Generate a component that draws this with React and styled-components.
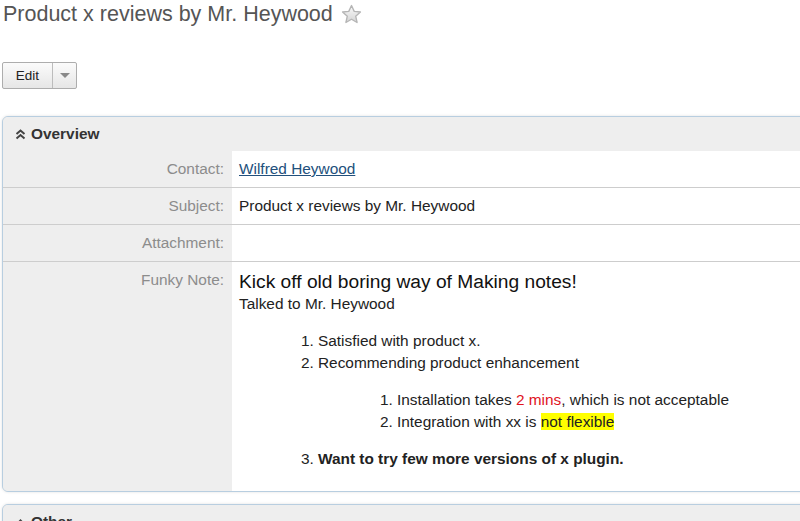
import React from 'react';
import styled, { createGlobalStyle } from 'styled-components';

const GlobalStyle = createGlobalStyle`
   html, body {
      margin:0;
      padding:0;
      background:#fff;
      overflow:hidden;
   }
   body {
      font-family:"Liberation Sans", Arial, sans-serif;
      color:#222;
   }
`

const Page = styled.div`
   width:800px;
   height:521px;
   overflow:hidden;
   padding-left:2px;
   box-sizing:border-box;
`

const TitleBar = styled.div`
   display:flex;
   align-items:center;
   gap:8px;
   height:28px;
   padding-left:1px;
`

const Title = styled.h1`
   margin:0;
   font-size:21.5px;
   line-height:28px;
   font-weight:normal;
   color:#555;
   white-space:nowrap;
`

const Toolbar = styled.div`
   display:flex;
   margin-top:34px;
   height:27px;
`

const SplitButton = styled.div`
   display:flex;
   border:1px solid #adadad;
   border-radius:2px;
   background:linear-gradient(#fbfbfb, #e6e6e6);
   box-sizing:border-box;
`

const ButtonPart = styled.button`
   border:none;
   border-left:${p => p.$divider ? '1px solid #bcbcbc' : 'none'};
   background:transparent;
   font-family:inherit;
   font-size:13.5px;
   color:#222;
   width:${p => p.$w}px;
   padding:0;
   display:flex;
   align-items:center;
   justify-content:center;
   cursor:pointer;
`

const Caret = styled.span`
   width:0;
   height:0;
   border-left:5px solid transparent;
   border-right:5px solid transparent;
   border-top:5px solid #888;
`

const Panel = styled.section`
   margin-top:${p => p.$mt}px;
   margin-right:-30px;
   border:1px solid #b8cee0;
   border-radius:6px;
   box-shadow:0 0 3px rgba(0,0,0,0.12);
   overflow:hidden;
   background:#eee;
`

const PanelHeader = styled.div`
   display:flex;
   align-items:center;
   gap:5px;
   height:34px;
   padding-left:12px;
   background:#eee;
   font-weight:bold;
   font-size:15.4px;
   color:#333;
`

const Row = styled.div`
   display:grid;
   grid-template-columns:229px 1fr;
   border-top:${p => p.$first ? 'none' : '1px solid #cdcdcd'};
`

const Label = styled.div`
   text-align:right;
   padding:9px 8px 9px 0;
   font-size:15.4px;
   line-height:18px;
   color:#8c8c8c;
   background:#eee;
`

const Value = styled.div`
   background:#fff;
   padding:9px 0 ${p => p.$pb || 9}px 7px;
   font-size:15.4px;
   line-height:18px;
   min-height:18px;
   color:#222;
`

const ContactLink = styled.a`
   color:#22507c;
   text-decoration:underline;
`

const Note = styled.div`
   line-height:21.5px;
`

const NoteHeading = styled.div`
   font-size:19.2px;
   color:#111;
`

const List = styled.ol`
   margin:16px 0;
   padding-left:79px;
   list-style:decimal outside;
`

const Red = styled.span`
   color:#e0141e;
`

const Mark = styled.span`
   background:#ffff00;
`

const StarIcon = () => (
   <svg width="21" height="21" viewBox="0 0 20 20">
      <defs>
         <linearGradient id="starg" x1="0" y1="0" x2="0" y2="1">
            <stop offset="0" stopColor="#fafafa"/>
            <stop offset="1" stopColor="#d4d4d4"/>
         </linearGradient>
      </defs>
      <path d="M10 1.5 L12.6 7 L18.5 7.6 L14 11.6 L15.3 17.6 L10 14.5 L4.7 17.6 L6 11.6 L1.5 7.6 L7.4 7 Z"
         fill="url(#starg)" stroke="#b5b5b5" strokeWidth="1.3" strokeLinejoin="round"/>
   </svg>
)

const ChevronsUp = () => (
   <svg width="11" height="11" viewBox="0 0 11 11">
      <polyline points="1.5,5 5.5,1.5 9.5,5" fill="none" stroke="#444" strokeWidth="2"/>
      <polyline points="1.5,9.5 5.5,6 9.5,9.5" fill="none" stroke="#444" strokeWidth="2"/>
   </svg>
)

const ChevronUp = () => (
   <svg width="11" height="11" viewBox="0 0 11 11">
      <polyline points="2,8 5.5,4.5 9,8" fill="none" stroke="#444" strokeWidth="2"/>
   </svg>
)

const App = () => {
   return(
      <Page>
         <GlobalStyle/>
         <TitleBar>
            <Title>Product x reviews by Mr. Heywood</Title>
            <StarIcon/>
         </TitleBar>

         <Toolbar>
            <SplitButton>
               <ButtonPart $w={49}>Edit</ButtonPart>
               <ButtonPart $w={24} $divider><Caret/></ButtonPart>
            </SplitButton>
         </Toolbar>

         <Panel $mt={27}>
            <PanelHeader><ChevronsUp/>Overview</PanelHeader>
            <Row $first>
               <Label>Contact:</Label>
               <Value><ContactLink href="#">Wilfred Heywood</ContactLink></Value>
            </Row>
            <Row>
               <Label>Subject:</Label>
               <Value>Product x reviews by Mr. Heywood</Value>
            </Row>
            <Row>
               <Label>Attachment:</Label>
               <Value></Value>
            </Row>
            <Row>
               <Label>Funky Note:</Label>
               <Value $pb={5}>
                  <Note>
                     <NoteHeading>Kick off old boring way of Making notes!</NoteHeading>
                     <div>Talked to Mr. Heywood</div>
                     <List>
                        <li>Satisfied with product x.</li>
                        <li>
                           Recommending product enhancement
                           <List>
                              <li>Installation takes <Red>2 mins</Red>, which is not acceptable</li>
                              <li>Integration with xx is <Mark>not flexible</Mark></li>
                           </List>
                        </li>
                        <li><strong>Want to try few more versions of x plugin.</strong></li>
                     </List>
                  </Note>
               </Value>
            </Row>
         </Panel>

         <Panel $mt={12}>
            <PanelHeader><ChevronUp/>Other</PanelHeader>
         </Panel>
      </Page>
   )
}

export default App
